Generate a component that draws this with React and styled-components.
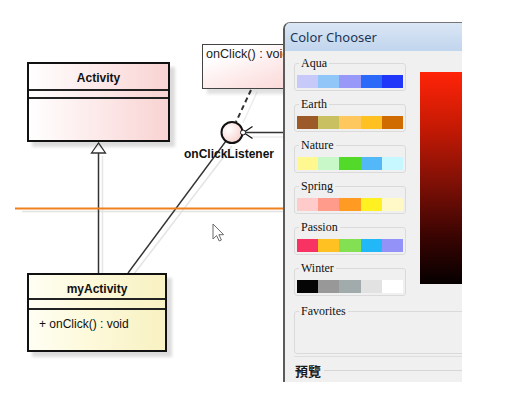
import React from "react";
import styled, { createGlobalStyle } from "styled-components";

const GlobalStyle = createGlobalStyle`
  html, body {
    margin: 0;
    padding: 0;
    background: #ffffff;
  }
  body {
    font-family: "Liberation Sans", Arial, sans-serif;
  }
`;

const Stage = styled.div`
  position: relative;
  width: 505px;
  height: 411px;
  overflow: hidden;
  background: #ffffff;
`;

const Edges = styled.svg`
  position: absolute;
  left: 0;
  top: 0;
  width: 505px;
  height: 411px;
`;

const tones = {
  pink: "linear-gradient(to right, #ffffff 0%, #fdebeb 45%, #f9d3d3 100%)",
  yellow: "linear-gradient(to right, #fffef3 0%, #fdf9da 45%, #f8f1c2 100%)",
};

const ClassBox = styled.div`
  position: absolute;
  left: ${({ $x }) => $x}px;
  top: ${({ $y }) => $y}px;
  width: ${({ $w }) => $w}px;
  box-sizing: border-box;
  border: 2px solid #111;
  background: ${({ $tone }) => tones[$tone]};
  box-shadow: 5px 5px 3px rgba(0, 0, 0, 0.14);
  display: flex;
  flex-direction: column;
  color: #111;
`;

const ClassName = styled.div`
  height: ${({ $h }) => $h}px;
  padding-top: 7px;
  box-sizing: border-box;
  border-bottom: 2px solid #222;
  text-align: center;
  font-weight: bold;
  font-size: 12px;
  line-height: 14px;
`;

const Compartment = styled.div`
  height: ${({ $h }) => $h}px;
  box-sizing: border-box;
  border-bottom: ${({ $last }) => ($last ? "none" : "2px solid #222")};
  padding: ${({ $last }) => ($last ? "7px 0 0 10px" : "0")};
  font-size: 12px;
  line-height: 14px;
  white-space: nowrap;
`;

const NoteBox = styled.div`
  position: absolute;
  left: 202px;
  top: 44px;
  width: 120px;
  height: 45px;
  box-sizing: border-box;
  border: 1px solid #444;
  padding: 2px 0 0 3px;
  background: linear-gradient(160deg, #ffffff 20%, #fde6e6 60%, #f9d2d2 100%);
  box-shadow: 5px 5px 3px rgba(0, 0, 0, 0.12);
  font-size: 12.6px;
  line-height: 14px;
  color: #222;
  white-space: nowrap;
`;

const InterfaceLabel = styled.div`
  position: absolute;
  left: 184px;
  top: 147px;
  font-size: 12px;
  line-height: 14px;
  font-weight: bold;
  color: #111;
  white-space: nowrap;
`;

const Cursor = styled.svg`
  position: absolute;
  left: 212px;
  top: 223px;
  width: 13px;
  height: 19px;
`;

const Window = styled.div`
  position: absolute;
  left: 283px;
  top: 22px;
  width: 179px;
  height: 360px;
  box-sizing: border-box;
  border-left: 2px solid #5b5b5b;
  border-top: 1px solid #767676;
  border-top-left-radius: 7px;
  background: #f0f0f0;
  overflow: hidden;
  z-index: 2;
`;

const TitleBar = styled.div`
  height: 28px;
  display: flex;
  align-items: center;
  padding-left: 5px;
  background: linear-gradient(#dae6f5, #c1d5ed);
  font-family: "Noto Sans", sans-serif;
  font-size: 13px;
  color: #1d3456;
  white-space: nowrap;
`;

const Body = styled.div`
  width: 320px;
  padding: 6px 0 0 9px;
  display: flex;
  flex-direction: column;
`;

const PaletteGrid = styled.div`
  display: grid;
  grid-template-columns: 112px 190px;
  column-gap: 14px;
  align-items: start;
`;

const PaletteColumn = styled.div`
  display: flex;
  flex-direction: column;
  gap: 7px;
`;

const Group = styled.fieldset`
  margin: 0;
  padding: 5px 2px 2px;
  min-width: 0;
  border: 1px solid #dadada;
  border-radius: 3px;
`;

const GroupLegend = styled.legend`
  margin-left: 2px;
  padding: 0 2px;
  font-family: "Liberation Serif", "Times New Roman", serif;
  font-size: 12px;
  line-height: 13px;
  color: #111;
`;

const SwatchRow = styled.div`
  display: flex;
  height: 13px;
`;

const Swatch = styled.div`
  flex: 1;
  background: ${({ $color }) => $color};
`;

const ColorField = styled.div`
  margin-top: 15px;
  height: 212px;
  background: linear-gradient(
    to bottom,
    #ff2408 0%,
    #c81a04 25%,
    #801006 52%,
    #380402 78%,
    #060000 100%
  );
`;

const Favorites = styled(Group)`
  margin-top: 9px;
  height: 49px;
  box-sizing: border-box;
  padding: 0 2px;
`;

const Separator = styled.div`
  margin-top: 2px;
  height: 1px;
  background: #dedede;
`;

const Preview = styled.fieldset`
  margin: 6px 0 0;
  padding: 0;
  min-width: 0;
  border: none;
  border-top: 1px solid #d6d6d6;
  height: 30px;
`;

const PreviewLegend = styled.legend`
  padding: 0 3px 0 1px;
  font-family: "Noto Sans CJK TC", "Noto Sans CJK SC", sans-serif;
  font-weight: bold;
  font-size: 13px;
  line-height: 15px;
  color: #1a1a1a;
`;

const palettes = [
  { name: "Aqua", colors: ["#c7c9f8", "#90c6f8", "#9898f8", "#2b69f8", "#2036f8"] },
  { name: "Earth", colors: ["#9b5a28", "#c8c061", "#ffc85e", "#ffc021", "#d06b02"] },
  { name: "Nature", colors: ["#fff890", "#c8f8c8", "#52d929", "#52b8f8", "#c8f8ff"] },
  { name: "Spring", colors: ["#ffcaca", "#ff9b8b", "#ff9a22", "#fff022", "#fff9c8"] },
  { name: "Passion", colors: ["#f83262", "#ffc022", "#82e052", "#22b8f8", "#9292f8"] },
  { name: "Winter", colors: ["#050505", "#989898", "#a2abab", "#e2e2e2", "#ffffff"] },
];

function Diagram() {
  return (
    <Edges viewBox="0 0 505 411">
      <defs>
        <radialGradient id="ifaceFill" cx="35%" cy="35%" r="75%">
          <stop offset="0%" stopColor="#ffffff" />
          <stop offset="100%" stopColor="#f7cfcb" />
        </radialGradient>
      </defs>
      {/* soft shadows of the connectors */}
      <line x1="102.5" y1="156" x2="102.5" y2="273" stroke="#e6e6e6" strokeWidth="1.5" />
      <line x1="134" y1="274" x2="232" y2="146" stroke="#e4e4e4" strokeWidth="1.5" />
      <line x1="257" y1="92" x2="243" y2="123" stroke="#ececec" strokeWidth="1.5" />
      <line x1="249" y1="137" x2="290" y2="137" stroke="#ececec" strokeWidth="1.5" />
      <line x1="22" y1="211.5" x2="290" y2="211.5" stroke="#e2e2e2" strokeWidth="1.5" />

      {/* generalization */}
      <line x1="98.5" y1="153" x2="98.5" y2="273" stroke="#333" strokeWidth="1.5" />
      <polygon points="98.5,143 91.5,153 105.5,153" fill="#fff" stroke="#333" strokeWidth="1.3" />

      {/* realization to interface */}
      <line x1="128" y1="273" x2="226" y2="141" stroke="#333" strokeWidth="1.4" />
      <line x1="251" y1="90" x2="236" y2="122" stroke="#333" strokeWidth="2" strokeDasharray="5 3.5" />
      <circle cx="232" cy="132.5" r="10.5" fill="url(#ifaceFill)" stroke="#111" strokeWidth="2" />
      <line x1="245.5" y1="132.5" x2="290" y2="132.5" stroke="#333" strokeWidth="1.3" />
      <polyline points="252.5,126.5 243.5,132.5 252.5,138.5" fill="none" stroke="#111" strokeWidth="1.2" />
      <circle cx="243" cy="132.5" r="2.5" fill="#fff" stroke="#111" strokeWidth="1" />

      {/* swimlane */}
      <line x1="15" y1="208.5" x2="290" y2="208.5" stroke="#f0801e" strokeWidth="2" />
    </Edges>
  );
}

function ColorChooser() {
  return (
    <Window>
      <TitleBar>Color Chooser</TitleBar>
      <Body>
        <PaletteGrid>
          <PaletteColumn>
            {palettes.map((p) => (
              <Group key={p.name}>
                <GroupLegend>{p.name}</GroupLegend>
                <SwatchRow>
                  {p.colors.map((c) => (
                    <Swatch key={c} $color={c} />
                  ))}
                </SwatchRow>
              </Group>
            ))}
          </PaletteColumn>
          <ColorField />
        </PaletteGrid>
        <Favorites>
          <GroupLegend>Favorites</GroupLegend>
        </Favorites>
        <Separator />
        <Preview>
          <PreviewLegend>預覽</PreviewLegend>
        </Preview>
      </Body>
    </Window>
  );
}

export default function App() {
  return (
    <>
      <GlobalStyle />
      <Stage>
        <Diagram />
        <ClassBox $x={27} $y={62} $w={143} $tone="pink">
          <ClassName $h={27}>Activity</ClassName>
          <Compartment $h={8} />
          <Compartment $h={41} $last />
        </ClassBox>
        <ClassBox $x={27} $y={273} $w={140} $tone="yellow">
          <ClassName $h={25}>myActivity</ClassName>
          <Compartment $h={10} />
          <Compartment $h={40} $last>+ onClick() : void</Compartment>
        </ClassBox>
        <NoteBox>onClick() : void</NoteBox>
        <InterfaceLabel>onClickListener</InterfaceLabel>
        <Cursor viewBox="0 0 13 19">
          <path
            d="M1 1 L1 16 L4.6 12.6 L7.2 18 L9.4 17 L6.9 11.7 L11.6 11.7 Z"
            fill="#fff"
            stroke="#6a6a6a"
            strokeWidth="1"
            strokeLinejoin="round"
          />
        </Cursor>
        <ColorChooser />
      </Stage>
    </>
  );
}
